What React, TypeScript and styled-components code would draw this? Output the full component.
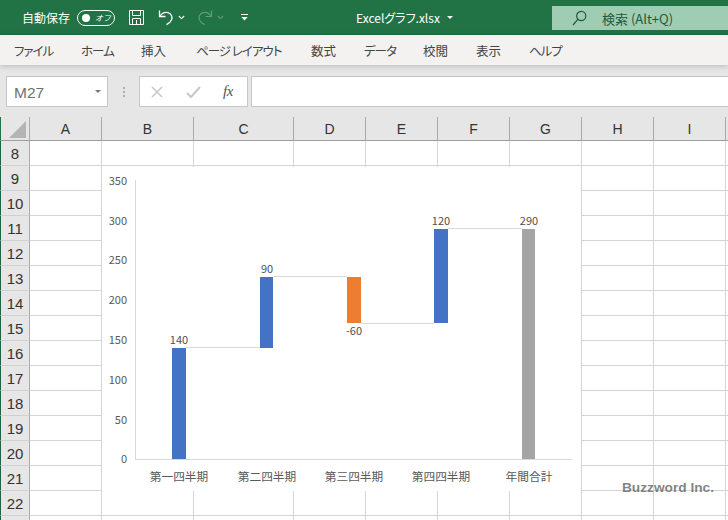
import React from "react";
import styled, { createGlobalStyle } from "styled-components";

const CJK = `"Noto Sans CJK JP", "Liberation Sans", sans-serif`;
const LATIN = `"Liberation Sans", "Noto Sans CJK JP", sans-serif`;

const GlobalStyle = createGlobalStyle`
  html, body { margin: 0; padding: 0; background: #fff; }
  body { font-family: ${CJK}; }
`;

const Page = styled.div`
  width: 728px;
  height: 520px;
  overflow: hidden;
  display: flex;
  flex-direction: column;
  position: relative;
`;

const TitleBar = styled.div`
  height: 35px;
  flex: none;
  background: #217346;
  color: #fff;
  display: flex;
  align-items: flex-start;
  padding-left: 22px;
  box-sizing: border-box;
`;

const QuickAccess = styled.div`
  display: flex;
  align-items: center;
  height: 35px;
  width: 334px;
  flex: none;
`;

const AutoSave = styled.span`
  font-size: 12px;
  font-feature-settings: "palt";
  width: 55px;
  white-space: nowrap;
`;

const Toggle = styled.div`
  width: 38px;
  height: 16px;
  border: 1px solid #fff;
  border-radius: 9px;
  box-sizing: border-box;
  display: flex;
  align-items: center;
  padding-left: 4px;
  gap: 5px;
  font-size: 8px;
  margin-right: 13px;
  font-style: italic;
`;

const Knob = styled.i`
  width: 8px;
  height: 8px;
  border-radius: 50%;
  background: #fff;
  flex: none;
`;

const QatIcon = styled.svg<{ $gap: number }>`
  display: block;
  flex: none;
  margin-right: ${(p) => p.$gap}px;
`;

const FileName = styled.div`
  width: 196px;
  flex: none;
  height: 35px;
  display: flex;
  align-items: center;
  font-size: 12px;
  font-feature-settings: "palt";
  gap: 7px;
  white-space: nowrap;
`;

const SearchBox = styled.div`
  margin-top: 6px;
  height: 24px;
  flex: 1;
  background: #9fcdb3;
  color: #1f5a3a;
  display: flex;
  align-items: center;
  padding-left: 20px;
  gap: 15px;
  font-size: 13px;
  white-space: nowrap;
`;

const MenuBar = styled.div`
  height: 30px;
  flex: none;
  background: #f3f2f1;
  display: flex;
  align-items: center;
  padding-left: 14px;
  gap: 28px;
  font-size: 12.5px;
  color: #444;
  font-feature-settings: "palt";
  box-shadow: 0 1px 6px rgba(0, 0, 0, 0.2);
  position: relative;
  z-index: 1;
`;

const MenuItem = styled.span<{ $width: number; $tight?: boolean }>`
  width: ${(p) => p.$width}px;
  flex: none;
  white-space: nowrap;
  letter-spacing: ${(p) => (p.$tight ? "-1px" : "0")};
`;

const FormulaBar = styled.div`
  height: 52px;
  flex: none;
  background: #e6e6e6;
  box-sizing: border-box;
  padding: 11px 0 10px 6px;
  display: flex;
`;

const FieldBox = styled.div<{ $width?: number; $gap?: number }>`
  background: #fff;
  border: 1px solid #c6c6c6;
  box-sizing: border-box;
  height: 31px;
  display: flex;
  align-items: center;
  margin-right: ${(p) => p.$gap ?? 0}px;
  ${(p) => (p.$width ? `width: ${p.$width}px; flex: none;` : "flex: 1; border-right: 0;")}
`;

const NameText = styled.span`
  font-family: ${LATIN};
  font-size: 15.5px;
  color: #707070;
  margin-left: 7px;
  flex: 1;
  padding-top: 2px;
`;

const Caret = styled.i<{ $color: string; $size: number; $right?: number }>`
  width: 0;
  height: 0;
  flex: none;
  margin-right: ${(p) => p.$right ?? 0}px;
  border-left: ${(p) => p.$size}px solid transparent;
  border-right: ${(p) => p.$size}px solid transparent;
  border-top: ${(p) => p.$size}px solid ${(p) => p.$color};
`;

const Grip = styled.div`
  width: 31px;
  flex: none;
  display: flex;
  flex-direction: column;
  align-items: center;
  justify-content: center;
  gap: 2px;
`;

const GripDot = styled.i`
  width: 2px;
  height: 2px;
  background: #b0b0b0;
`;

const EditIcons = styled.svg`
  margin-left: 11px;
  flex: none;
`;

const FxLabel = styled.span`
  font-family: "Liberation Serif", serif;
  font-style: italic;
  font-size: 15px;
  color: #555;
  margin-left: 10px;
  letter-spacing: -0.5px;
`;

const Sheet = styled.div`
  position: relative;
  flex: 1;
  display: grid;
  grid-template-columns: 30px 72px 92px 100px repeat(7, 72px);
  grid-template-rows: 24px;
  grid-auto-rows: 25px;
  background: #fff;
  overflow: hidden;
`;

const Corner = styled.div`
  background: #e6e6e6;
  border-left: 1px solid #217346;
  border-right: 1px solid #ababab;
  border-bottom: 1px solid #9e9e9e;
  box-sizing: border-box;
  padding: 4px 0 0 8px;
`;

const CornerMark = styled.svg`
  display: block;
`;

const ColHead = styled.div`
  background: #e6e6e6;
  border-right: 1px solid #ababab;
  border-bottom: 1px solid #9e9e9e;
  box-sizing: border-box;
  font-family: ${LATIN};
  font-size: 14px;
  color: #333;
  display: flex;
  align-items: center;
  justify-content: center;
`;

const RowHead = styled.div`
  background: #e6e6e6;
  border-right: 1px solid #ababab;
  border-bottom: 1px solid #d0d0d0;
  border-left: 1px solid #1d6440;
  box-sizing: border-box;
  font-family: ${LATIN};
  font-size: 15px;
  color: #333;
  padding-top: 1px;
  display: flex;
  align-items: center;
  justify-content: center;
`;

const Cell = styled.div`
  border-right: 1px solid #d4d4d4;
  border-bottom: 1px solid #d4d4d4;
  box-sizing: border-box;
`;

const ChartFrame = styled.svg`
  position: absolute;
  left: 102px;
  top: 50px;
  width: 479px;
  height: 324px;
  background: #fff;
  display: block;
`;

const AxisLabel = styled.text`
  font-family: ${CJK};
  font-size: 11px;
  fill: #595959;
  text-anchor: end;
`;

const DataLabel = styled.text`
  font-family: ${CJK};
  font-size: 11px;
  fill: #505050;
  text-anchor: middle;
`;

const CategoryLabel = styled.text`
  font-family: ${CJK};
  font-size: 11.7px;
  fill: #595959;
  text-anchor: middle;
`;

const Watermark = styled.div`
  position: absolute;
  right: 14px;
  bottom: 25px;
  font-family: ${LATIN};
  font-weight: bold;
  font-size: 13.7px;
  color: rgba(90, 90, 90, 0.75);
  line-height: 1;
`;

const MENU = [
  { label: "ファイル", width: 39, tight: true },
  { label: "ホーム", width: 32, tight: true },
  { label: "挿入", width: 27 },
  { label: "ページ レイアウト", width: 87, tight: true },
  { label: "数式", width: 25 },
  { label: "データ", width: 31, tight: true },
  { label: "校閲", width: 25 },
  { label: "表示", width: 25 },
  { label: "ヘルプ", width: 32, tight: true },
];

const COLUMNS = ["A", "B", "C", "D", "E", "F", "G", "H", "I", ""];
const ROWS = Array.from({ length: 16 }, (_, i) => i + 8);

const AXIS = [
  { v: 350, y: 185 },
  { v: 300, y: 225 },
  { v: 250, y: 264 },
  { v: 200, y: 304 },
  { v: 150, y: 344 },
  { v: 100, y: 384 },
  { v: 50, y: 424 },
  { v: 0, y: 463 },
];

// pixel rows taken from the plot: 0 is at 459, top of the axis at 180
const BARS = [
  { x: 172, w: 14, top: 348, bottom: 459, color: "#4472c4", label: "140", labelY: 344, name: "第一四半期" },
  { x: 260, w: 13, top: 277, bottom: 348, color: "#4472c4", label: "90", labelY: 273, name: "第二四半期" },
  { x: 347, w: 14, top: 277, bottom: 323, color: "#ed7d31", label: "-60", labelY: 335, name: "第三四半期" },
  { x: 434, w: 14, top: 229, bottom: 323, color: "#4472c4", label: "120", labelY: 225, name: "第四四半期" },
  { x: 522, w: 13, top: 229, bottom: 459, color: "#a5a5a5", label: "290", labelY: 225, name: "年間合計" },
];

const LINKS = [
  { x1: 186, x2: 260, y: 347.5 },
  { x1: 273, x2: 347, y: 276.5 },
  { x1: 361, x2: 434, y: 323.5 },
  { x1: 448, x2: 522, y: 228.5 },
];

const Chart = () => (
  <ChartFrame viewBox="102 167 479 324">
    <line x1="135.5" y1="180" x2="135.5" y2="459" stroke="#d9d9d9" />
    <line x1="135" y1="459.5" x2="572" y2="459.5" stroke="#d9d9d9" />
    {AXIS.map((a) => (
      <AxisLabel key={a.v} x="127" y={a.y}>
        {a.v}
      </AxisLabel>
    ))}
    {LINKS.map((l) => (
      <line key={l.x1} x1={l.x1} x2={l.x2} y1={l.y} y2={l.y} stroke="#d9d9d9" />
    ))}
    {BARS.map((b) => (
      <g key={b.x}>
        <rect x={b.x} y={b.top} width={b.w} height={b.bottom - b.top} fill={b.color} />
        <DataLabel x={b.x + 7} y={b.labelY}>
          {b.label}
        </DataLabel>
        <CategoryLabel x={b.x + 7} y="481">
          {b.name}
        </CategoryLabel>
      </g>
    ))}
  </ChartFrame>
);

export default function App() {
  return (
    <Page>
      <GlobalStyle />
      <TitleBar>
        <QuickAccess>
          <AutoSave>自動保存</AutoSave>
          <Toggle>
            <Knob />
            オフ
          </Toggle>
          <QatIcon $gap={13} width="17" height="17" viewBox="0 0 17 17" fill="none" stroke="#fff">
            <path d="M1.5 1.5h14v14h-14z" />
            <path d="M4.5 1.5v5h8v-5M4.5 15.5v-6h8v6M8.5 11v4" />
          </QatIcon>
          <QatIcon $gap={4} width="16" height="17" viewBox="0 0 16 17" fill="none" stroke="#fff" strokeWidth="1.3">
            <path d="M1.5 1.5v6h6" />
            <path d="M1.7 7.3C4 4 7 2.8 10 3.6c3.5 1 4.6 4.4 3.6 7-.7 2-2.4 3.6-5.1 5" />
          </QatIcon>
          <QatIcon $gap={12} width="7" height="5" viewBox="0 0 7 5" fill="none" stroke="#fff" strokeWidth="1.1">
            <path d="M.8 1l2.7 2.6L6.2 1" />
          </QatIcon>
          <QatIcon $gap={4} width="16" height="17" viewBox="0 0 16 17" fill="none" stroke="#5f9c7b" strokeWidth="1.2">
            <path d="M14.5 1.5v6h-6" />
            <path d="M14.3 7.3C12 4 9 2.8 6 3.6c-3.5 1-4.6 4.4-3.6 7 .7 2 2.4 3.6 5.1 5" />
          </QatIcon>
          <QatIcon $gap={17} width="7" height="5" viewBox="0 0 7 5" fill="none" stroke="#5f9c7b" strokeWidth="1.1">
            <path d="M.8 1l2.7 2.6L6.2 1" />
          </QatIcon>
          <QatIcon $gap={0} width="7" height="7" viewBox="0 0 7 7" fill="#fff">
            <path d="M0 0h7v1H0zM.3 3h6.4L3.5 6.6z" />
          </QatIcon>
        </QuickAccess>
        <FileName>
          Excelグラフ.xlsx
          <Caret $color="#fff" $size={3} />
        </FileName>
        <SearchBox>
          <svg width="15" height="16" viewBox="0 0 15 16" fill="none" stroke="#1f5a3a" strokeWidth="1.2">
            <circle cx="9.2" cy="6" r="4.6" />
            <path d="M5.8 9.4L1 15" />
          </svg>
          検索 (Alt+Q)
        </SearchBox>
      </TitleBar>
      <MenuBar>
        {MENU.map((m) => (
          <MenuItem key={m.label} $width={m.width} $tight={m.tight}>
            {m.label}
          </MenuItem>
        ))}
      </MenuBar>
      <FormulaBar>
        <FieldBox $width={102}>
          <NameText>M27</NameText>
          <Caret $color="#777" $size={3.5} $right={6} />
        </FieldBox>
        <Grip>
          <GripDot />
          <GripDot />
          <GripDot />
        </Grip>
        <FieldBox $width={109} $gap={3}>
          <EditIcons width="62" height="14" viewBox="0 0 62 14" fill="none">
            <path d="M1 2l10 10M11 2L1 12" stroke="#c8c8c8" strokeWidth="1.5" />
            <path d="M36 8l4 4 9-10" stroke="#c8c8c8" strokeWidth="2" />
          </EditIcons>
          <FxLabel>fx</FxLabel>
        </FieldBox>
        <FieldBox />
      </FormulaBar>
      <Sheet>
        <Corner>
          <CornerMark width="17" height="17" viewBox="0 0 17 17">
            <path d="M17 0v17H0z" fill="#b4b4b4" />
          </CornerMark>
        </Corner>
        {COLUMNS.map((c, i) => (
          <ColHead key={i}>{c}</ColHead>
        ))}
        {ROWS.map((r) => (
          <React.Fragment key={r}>
            <RowHead>{r < 23 ? r : ""}</RowHead>
            {COLUMNS.map((c, i) => (
              <Cell key={i} />
            ))}
          </React.Fragment>
        ))}
        <Chart />
        <Watermark>Buzzword Inc.</Watermark>
      </Sheet>
    </Page>
  );
}
